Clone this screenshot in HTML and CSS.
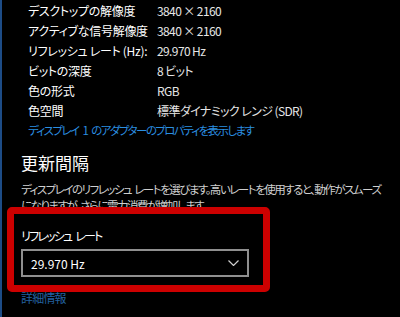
FILE: index.html
```html
<!DOCTYPE html>
<html lang="ja">
<head>
  <meta charset="UTF-8" />
  <title>ディスプレイの詳細設定</title>
  <link rel="stylesheet" href="styles.css">
</head>
<body>
  <div class="page">
    <div class="info">
      <div class="row"><span class="label">デスクトップの解像度</span><span class="value">3840 × 2160</span></div>
      <div class="row"><span class="label">アクティブな信号解像度</span><span class="value">3840 × 2160</span></div>
      <div class="row"><span class="label">リフレッシュ レート (Hz):</span><span class="value">29.970 Hz</span></div>
      <div class="row"><span class="label">ビットの深度</span><span class="value">8 ビット</span></div>
      <div class="row"><span class="label">色の形式</span><span class="value">RGB</span></div>
      <div class="row"><span class="label">色空間</span><span class="value">標準ダイナミック レンジ (SDR)</span></div>
      <a class="link" href="#">ディスプレイ 1 のアダプターのプロパティを表示します</a>
    </div>

    <h2>更新間隔</h2>
    <p class="desc">ディスプレイのリフレッシュ レートを選びます。高いレートを使用すると、動作がスムーズになりますが、さらに電力消費が増加します。</p>

    <label class="field-label">リフレッシュ レート</label>
    <div class="select">
      <span>29.970 Hz</span>
      <svg width="11" height="6" viewBox="0 0 11 6"><path d="M0.5 0.5 L5.5 5.5 L10.5 0.5" fill="none" stroke="#cfcfcf" stroke-width="1.2"/></svg>
    </div>

    <a class="more" href="#">詳細情報</a>

    <!-- highlight annotation drawn over the screenshot -->
    <div class="highlight"></div>
  </div>
</body>
</html>
```

FILE: styles.css
```css
body {
  margin: 0;
  padding: 0;
  background: #000;
  color: #fff;
  font-family: "Noto Sans CJK JP", "Noto Sans", sans-serif;
  font-feature-settings: "palt";
}

.page {
  position: relative;
  height: 317px;
  overflow: hidden;
  border-left: 2px solid #1d4c86;
  padding-left: 19px;
}

.info {
  padding-left: 7px;
}

.row {
  display: flex;
  height: 20px;
  align-items: center;
  font-size: 12px;
  letter-spacing: -0.3px;
}

.label {
  width: 129px;
  flex-shrink: 0;
  white-space: nowrap;
}

.value {
  color: #e6e6e6;
  letter-spacing: -0.6px;
}

.link {
  display: flex;
  align-items: center;
  height: 20px;
  font-size: 11.5px;
  letter-spacing: -1.6px;
  word-spacing: 3px;
  color: #2b8fe0;
  text-decoration: none;
}

h2 {
  margin: 0 0 6px;
  padding-top: 11px;
  font-size: 17px;
  font-weight: 400;
  line-height: 24px;
}

.desc {
  margin: 0;
  width: 362px;
  font-size: 11.5px;
  line-height: 16px;
  letter-spacing: -1.5px;
  word-spacing: 2px;
  color: #cfcfcf;
}

.field-label {
  display: block;
  margin-top: 14px;
  font-size: 12px;
  line-height: 18px;
  letter-spacing: -1.8px;
  word-spacing: 3px;
}

.select {
  display: flex;
  align-items: center;
  justify-content: space-between;
  box-sizing: border-box;
  width: 228px;
  height: 28px;
  margin-top: 4px;
  padding: 0 8px 0 8px;
  border: 2px solid #8f8f8f;
  font-size: 12px;
}

.more {
  display: block;
  margin-top: 12px;
  font-size: 12px;
  line-height: 17px;
  letter-spacing: -0.8px;
  color: #23609f;
  text-decoration: none;
}

.highlight {
  position: absolute;
  left: 5px;
  top: 207px;
  width: 263px;
  height: 85px;
  box-sizing: border-box;
  border: 7px solid #cc0000;
  border-radius: 5px;
}
```
